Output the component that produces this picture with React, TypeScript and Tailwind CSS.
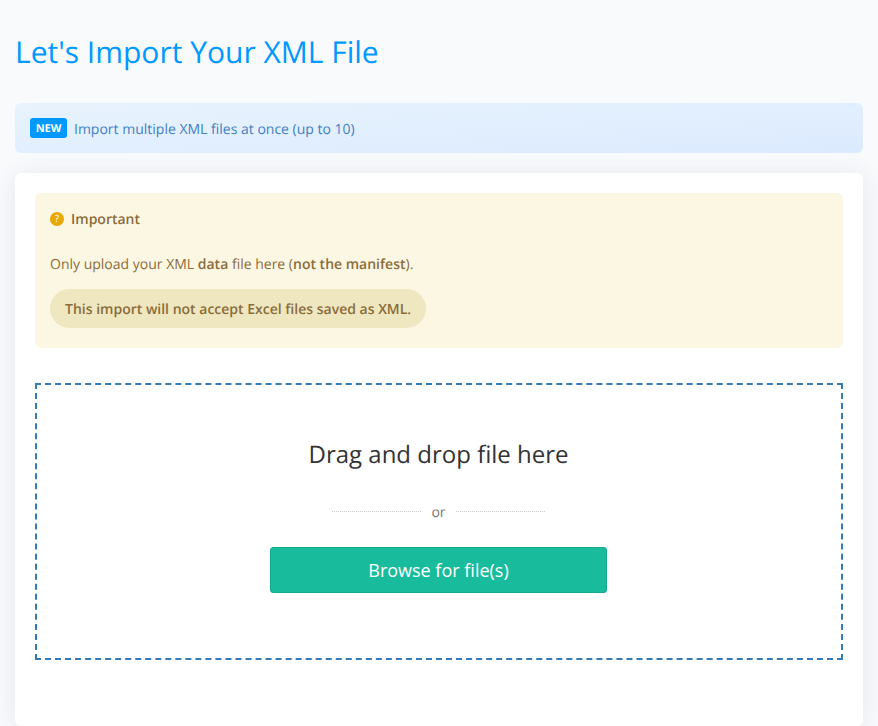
export default function App() {
  return (
    <div className="h-[726px] overflow-hidden bg-[#f9fafc] px-[15px] font-['Open_Sans',sans-serif] [text-rendering:geometricPrecision]">
      {/* Title */}
      <h1 className="pt-[32px] text-[30px] leading-[40px] font-normal text-[#0099ff]">
        Let's Import Your XML File
      </h1>

      {/* New feature banner */}
      <div className="mt-[31px] flex h-[50px] items-center rounded-md bg-gradient-to-br from-[#e8f3fd] to-[#dbeafe] px-[15px]">
        <span className="flex h-[20px] w-[37px] items-center justify-center rounded-[3px] bg-[#0099ff] pt-[2px] text-[11px] font-bold text-white">
          NEW
        </span>
        <span className="ml-[7px] pt-[2px] text-[14px] text-[#4280c4]">
          Import multiple XML files at once (up to 10)
        </span>
      </div>

      {/* Main card */}
      <div className="mt-[20px] h-[553px] rounded-md bg-white p-[20px] shadow-[0_2px_24px_rgba(30,60,110,0.1)]">
        <div className="h-[155px] rounded-md bg-[#fcf7e3] p-[15px] text-[14px] text-[#8a6d3b]">
          <div className="flex h-[21px] items-center">
            <span className="flex h-[14px] w-[14px] items-center justify-center rounded-full bg-[#e8a800] text-[10px] text-white">
              ?
            </span>
            <span className="ml-[7px] pt-[2px] font-semibold">Important</span>
          </div>
          <p className="mt-[25px] leading-[21px]">
            Only upload your XML <span className="font-semibold">data</span> file here (
            <span className="font-semibold">not the manifest</span>).
          </p>
          <div className="mt-[14px] flex h-[39px] w-fit items-center rounded-[20px] bg-[#efe7c0] px-[15px] pt-[2px] font-semibold">
            This import will not accept Excel files saved as XML.
          </div>
        </div>

        {/* Drop zone */}
        <div className="mt-[35px] flex h-[277px] flex-col items-center border-2 border-dashed border-[#337ab7] pt-[50px] pr-[1px]">
          <div className="text-[24px] leading-[40px] text-[#333333]">Drag and drop file here</div>
          <div className="mt-[27px] flex h-[20px] items-center text-[14px] text-[#777777]">
            <span className="w-[89px] -translate-y-[1px] border-t border-dotted border-[#cccccc]"></span>
            <span className="mx-[10px] w-[15px] text-center">or</span>
            <span className="w-[89px] -translate-y-[1px] border-t border-dotted border-[#cccccc]"></span>
          </div>
          <button className="mt-[25px] h-[46px] w-[337px] rounded-[3px] border border-[#15ab8e] bg-[#18bc9c] text-[18px] text-white">
            Browse for file(s)
          </button>
        </div>
      </div>
    </div>
  )
}
